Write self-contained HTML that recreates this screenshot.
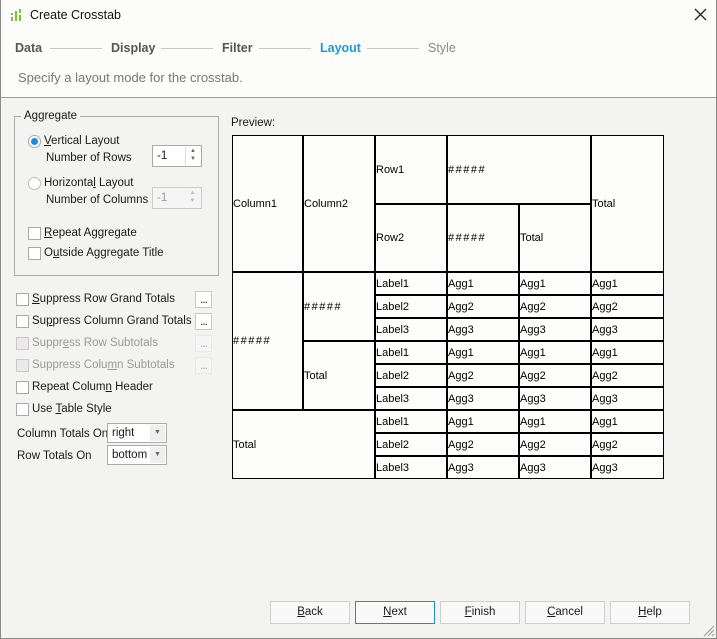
<!DOCTYPE html>
<html><head><meta charset="utf-8"><style>
*{box-sizing:border-box;margin:0;padding:0}
body{width:717px;height:639px;overflow:hidden;background:#f3f3f1;font-family:"Liberation Sans",sans-serif;font-size:12px;color:#1a1a1a;position:relative}
.abs{position:absolute}
#frame{position:absolute;left:0;top:0;width:717px;height:639px;border:1px solid #8a8a8a;border-top:none;pointer-events:none}
#head{position:absolute;left:0;top:0;width:717px;height:98px;background:#fcfdfb;border-bottom:1px solid #a0a0a0}
.step{position:absolute;top:41px;font-size:12.5px;font-weight:bold;color:#555}
.ln{position:absolute;top:48px;height:1px;background:#c8c8c8}
.cb{position:absolute;width:13px;height:13px;border:1px solid #a8a8a8;background:#fff}
.cb.dis{background:#ebe9ec;border-color:#c8c8c8}
.lbl{position:absolute;font-size:11.5px;white-space:nowrap}
.dis2{color:#999}
.dots{position:absolute;width:17px;height:17px;border:1px solid #c8c8c8;background:#fff;font-size:12px;text-align:center;line-height:14px;color:#333;letter-spacing:-1px}
.dots.d{color:#aaa;border-color:#e8e8e8;background:#f5f5f5}
.c{position:absolute;border:1px solid #000;background:#fdfefc;font-size:11px;display:flex;align-items:center;white-space:nowrap;color:#000}
.h{letter-spacing:1.5px}
.btn{position:absolute;top:601px;width:80px;height:23px;border:1px solid #cfcfcf;background:#f8f9f8;text-align:center;line-height:21px;font-size:11.5px}
u{text-decoration:underline}
</style></head><body>
<div id="head">
  <svg class="abs" style="left:10px;top:8px" width="14" height="16"><rect x="1" y="9" width="2" height="4" fill="#7bbf3a"/><rect x="1" y="5" width="2" height="2" fill="#7bbf3a"/><rect x="5" y="3" width="2" height="10" fill="#7bbf3a"/><rect x="9" y="7" width="2" height="6" fill="#7bbf3a"/><rect x="9" y="1" width="2" height="4" fill="#7bbf3a"/></svg>
  <div class="abs" style="left:30px;top:8px;font-size:12.5px;color:#111">Create Crosstab</div>
  <svg class="abs" style="left:694px;top:8px" width="13" height="13"><path d="M1 1L12 12M12 1L1 12" stroke="#222" stroke-width="1.3"/></svg>
  <div class="step" style="left:15px">Data</div>
  <div class="ln" style="left:50px;width:52px"></div>
  <div class="step" style="left:111px">Display</div>
  <div class="ln" style="left:161px;width:52px"></div>
  <div class="step" style="left:222px">Filter</div>
  <div class="ln" style="left:259px;width:52px"></div>
  <div class="step" style="left:320px;color:#1a9be0">Layout</div>
  <div class="ln" style="left:367px;width:52px"></div>
  <div class="step" style="left:428px;font-weight:normal;color:#888">Style</div>
  <div class="abs" style="left:18px;top:70px;font-size:13px;color:#777">Specify a layout mode for the crosstab.</div>
</div>

<div class="abs" style="left:14px;top:116px;width:205px;height:160px;border:1px solid #aaa"></div>
<div class="lbl" style="left:21px;top:110px;background:#f3f3f1;padding:0 3px">Aggregate</div>
<div class="abs" style="left:28px;top:135px;width:13px;height:13px;border-radius:50%;border:1px solid #aaa;background:#fff"><div style="position:absolute;left:2px;top:2px;width:7px;height:7px;border-radius:50%;background:#1a8ce0"></div></div>
<div class="lbl" style="left:44px;top:135px"><u>V</u>ertical Layout</div>
<div class="lbl" style="left:46px;top:152px">Number of Rows</div>
<div class="abs" style="left:152px;top:145px;width:50px;height:22px;border:1px solid #aaa;background:#fff;font-size:11.5px;padding:4px 0 0 4px">-1</div>
<div class="abs" style="left:185px;top:147px;width:15px;height:18px;border-left:1px solid #ddd;font-size:6px;color:#666;text-align:center;line-height:8px">▲<br>▼</div>
<div class="abs" style="left:28px;top:177px;width:13px;height:13px;border-radius:50%;border:1px solid #bbb;background:#fff"></div>
<div class="lbl" style="left:44px;top:177px">Horizonta<u>l</u> Layout</div>
<div class="lbl" style="left:46px;top:194px">Number of Columns</div>
<div class="abs" style="left:152px;top:187px;width:50px;height:22px;border:1px solid #ccc;background:#f5f5f5;font-size:11.5px;padding:4px 0 0 4px;color:#999">-1</div>
<div class="abs" style="left:185px;top:189px;width:15px;height:18px;font-size:6px;color:#bbb;text-align:center;line-height:8px">▲<br>▼</div>
<div class="cb" style="left:28px;top:227px"></div><div class="lbl" style="left:44px;top:227px"><u>R</u>epeat Aggregate</div>
<div class="cb" style="left:28px;top:247px"></div><div class="lbl" style="left:44px;top:247px">O<u>u</u>tside Aggregate Title</div>

<div class="cb" style="left:16px;top:293px"></div><div class="lbl" style="left:32px;top:293px"><u>S</u>uppress Row Grand Totals</div><div class="dots" style="left:195px;top:291px">...</div>
<div class="cb" style="left:16px;top:315px"></div><div class="lbl" style="left:32px;top:315px">Su<u>p</u>press Column Grand Totals</div><div class="dots" style="left:195px;top:313px">...</div>
<div class="cb dis" style="left:16px;top:337px"></div><div class="lbl dis2" style="left:32px;top:337px">Suppr<u>e</u>ss Row Subtotals</div><div class="dots d" style="left:195px;top:335px">...</div>
<div class="cb dis" style="left:16px;top:359px"></div><div class="lbl dis2" style="left:32px;top:359px">Suppress Colu<u>m</u>n Subtotals</div><div class="dots d" style="left:195px;top:357px">...</div>
<div class="cb" style="left:16px;top:381px"></div><div class="lbl" style="left:32px;top:381px">Repeat Colum<u>n</u> Header</div>
<div class="cb" style="left:16px;top:403px"></div><div class="lbl" style="left:32px;top:403px">Use <u>T</u>able Style</div>
<div class="lbl" style="left:17px;top:428px">Column Totals On</div>
<div class="abs" style="left:107px;top:423px;width:60px;height:20px;border:1px solid #aaa;background:#fff;font-size:11.5px;padding:3px 0 0 4px">right</div>
<div class="abs" style="left:150px;top:425px;width:15px;height:16px;background:#eee;font-size:7px;color:#666;text-align:center;line-height:16px">▼</div>
<div class="lbl" style="left:17px;top:450px">Row Totals On</div>
<div class="abs" style="left:107px;top:445px;width:60px;height:20px;border:1px solid #aaa;background:#fff;font-size:11.5px;padding:3px 0 0 4px">bottom</div>
<div class="abs" style="left:150px;top:447px;width:15px;height:16px;background:#eee;font-size:7px;color:#666;text-align:center;line-height:16px">▼</div>

<div class="lbl" style="left:231px;top:117px">Preview:</div>
<div class="c" style="left:232px;top:135px;width:71px;height:137px">Column1</div>
<div class="c" style="left:303px;top:135px;width:72px;height:137px">Column2</div>
<div class="c" style="left:375px;top:135px;width:72px;height:69px">Row1</div>
<div class="c h" style="left:447px;top:135px;width:144px;height:69px">#####</div>
<div class="c" style="left:591px;top:135px;width:73px;height:137px">Total</div>
<div class="c" style="left:375px;top:204px;width:72px;height:68px">Row2</div>
<div class="c h" style="left:447px;top:204px;width:72px;height:68px">#####</div>
<div class="c" style="left:519px;top:204px;width:72px;height:68px">Total</div>
<div class="c h" style="left:232px;top:272px;width:71px;height:138px">#####</div>
<div class="c h" style="left:303px;top:272px;width:72px;height:69px">#####</div>
<div class="c" style="left:303px;top:341px;width:72px;height:69px">Total</div>
<div class="c" style="left:232px;top:410px;width:143px;height:69px">Total</div>
<div id="rows"></div>
<script>
var h='';for(var i=0;i<9;i++){var y=272+23*i,n=(i%3)+1;
h+='<div class="c" style="left:375px;top:'+y+'px;width:72px;height:23px">Label'+n+'</div>';
h+='<div class="c" style="left:447px;top:'+y+'px;width:72px;height:23px">Agg'+n+'</div>';
h+='<div class="c" style="left:519px;top:'+y+'px;width:72px;height:23px">Agg'+n+'</div>';
h+='<div class="c" style="left:591px;top:'+y+'px;width:73px;height:23px">Agg'+n+'</div>';}
document.getElementById('rows').innerHTML=h;
</script>

<div class="btn" style="left:270px"><u>B</u>ack</div>
<div class="btn" style="left:355px;border-color:#1a8ce0"><u>N</u>ext</div>
<div class="btn" style="left:440px"><u>F</u>inish</div>
<div class="btn" style="left:525px"><u>C</u>ancel</div>
<div class="btn" style="left:610px"><u>H</u>elp</div>
<svg class="abs" style="left:703px;top:625px" width="12" height="12"><path d="M11 1L1 11M11 5L5 11M11 9L9 11" stroke="#999"/></svg>
<div id="frame"></div>
</body></html>
